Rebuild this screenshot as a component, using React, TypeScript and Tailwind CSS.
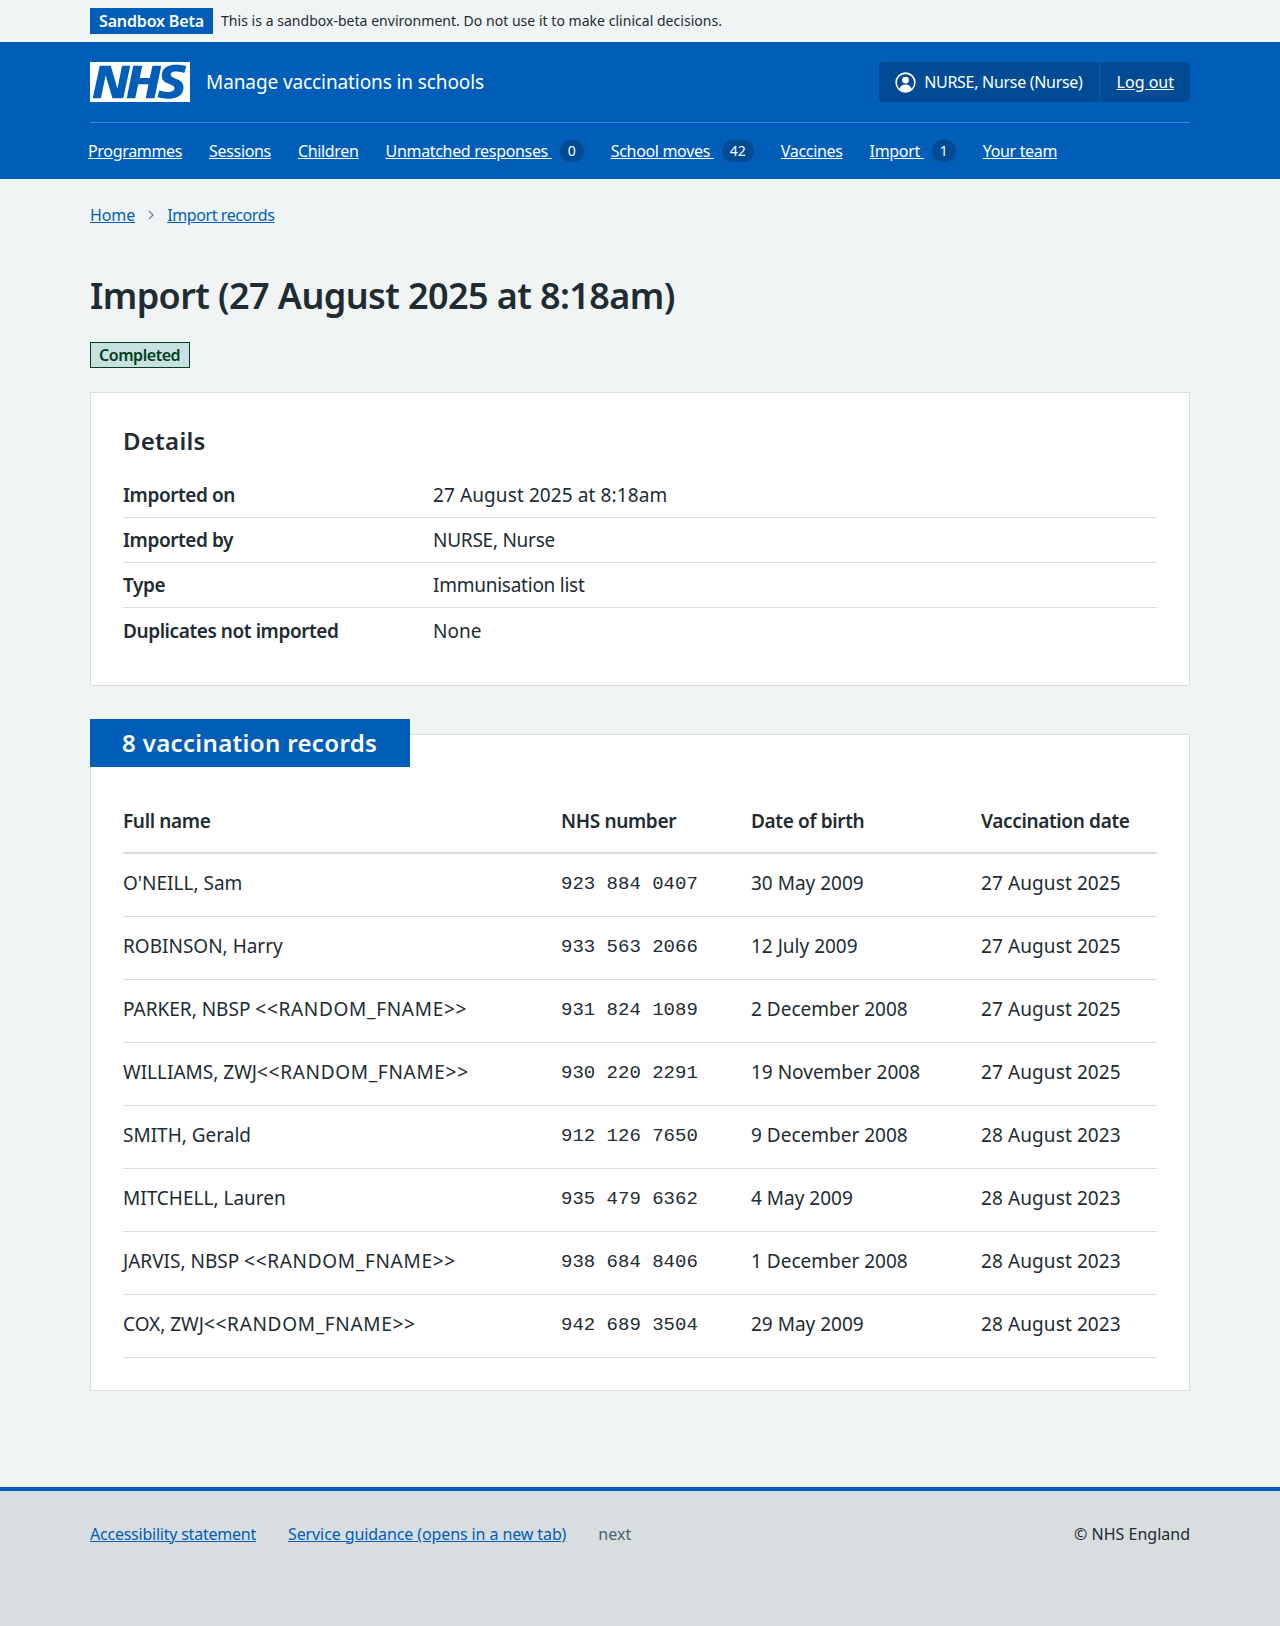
const font = "font-['Noto_Sans',sans-serif]";

function NhsLogo() {
    return (
        <svg viewBox="0 0 40 16" className="h-10 w-[100px] block">
            <path fill="#fff" d="M0 0h40v16H0z" />
            <path fill="#005eb8" d="M3.9 1.5h4.4l2.6 9h.1l1.8-9h3.3l-2.8 13H9l-2.7-9h-.1l-1.8 9H1.1M17.3 1.5h3.6l-1 4.9h4L25 1.5h3.5l-2.7 13h-3.5l1.1-5.6h-4.1l-1.2 5.6h-3.4M37.7 4.4c-.7-.3-1.6-.6-2.9-.6-1.4 0-2.5.2-2.5 1.3 0 1.8 5.1 1.2 5.1 5.1 0 3.6-3.3 4.5-6.4 4.5-1.3 0-2.9-.3-4-.7l.8-2.7c.7.4 2.1.7 3.2.7s2.8-.2 2.8-1.5c0-2.1-5.1-1.3-5.1-5 0-3.4 2.9-4.4 5.8-4.4 1.6 0 3.1.2 4 .6" />
        </svg>
    );
}

function UserIcon() {
    return (
        <svg viewBox="0 0 24 24" className="w-[23px] h-[23px]" fill="none">
            <circle cx="12" cy="12" r="9.8" stroke="#fff" strokeWidth="1.6" />
            <circle cx="12" cy="9.5" r="3.6" fill="#fff" />
            <path fill="#fff" d="M5.8 19c.4-3.400 2.800-5 6.200-5s5.800 1.600 6.200 5c-1.600 1.600-3.800 2.500-6.200 2.500S7.400 20.600 5.800 19z" />
        </svg>
    );
}

function NavItem({ label, count }: { label: string; count?: string }) {
    return (
        <span className="flex items-center">
            <a className="text-white underline whitespace-pre tracking-[-0.33px]">{label}{count ? " " : ""}</a>
            {count && (
                <span className="ml-2 h-[22px] min-w-6 px-2 rounded-full bg-[#004b93] text-white text-[14px] leading-[22px] text-center">{count}</span>
            )}
        </span>
    );
}

const details = [
    ["Imported on", "27 August 2025 at 8:18am", "tracking-[0.1px]"],
    ["Imported by", "NURSE, Nurse", "tracking-[-0.25px]"],
    ["Type", "Immunisation list", "tracking-[-0.25px]"],
    ["Duplicates not imported", "None", ""],
];

const records = [
    ["O'NEILL, Sam", "", "923 884 0407", "30 May 2009", "27 August 2025"],
    ["ROBINSON, Harry", "", "933 563 2066", "12 July 2009", "27 August 2025"],
    ["PARKER, NBSP ", "<<RANDOM_FNAME>>", "931 824 1089", "2 December 2008", "27 August 2025"],
    ["WILLIAMS, ZWJ", "<<RANDOM_FNAME>>", "930 220 2291", "19 November 2008", "27 August 2025"],
    ["SMITH, Gerald", "", "912 126 7650", "9 December 2008", "28 August 2023"],
    ["MITCHELL, Lauren", "", "935 479 6362", "4 May 2009", "28 August 2023"],
    ["JARVIS, NBSP ", "<<RANDOM_FNAME>>", "938 684 8406", "1 December 2008", "28 August 2023"],
    ["COX, ZWJ", "<<RANDOM_FNAME>>", "942 689 3504", "29 May 2009", "28 August 2023"],
];

export default function App() {
    return (
        <div className={`${font} min-h-[1626px] flex flex-col bg-[#f0f4f5] text-[#212b32] text-[19px] leading-7`}>
            <div className="h-[42px] px-[90px] flex items-center">
                <span className="bg-[#005eb8] text-white font-semibold text-[16px] leading-[26px] px-[9px] tracking-[-0.15px]">Sandbox Beta</span>
                <span className="ml-2 text-[14px] tracking-[0.03px]">This is a sandbox-beta environment. Do not use it to make clinical decisions.</span>
            </div>

            <header className="bg-[#005eb8] h-[137px] px-[90px] text-white">
                <div className="h-[81px] flex items-center justify-between border-b border-[#3d84c9]">
                    <div className="flex items-center">
                        <NhsLogo />
                        <span className="ml-4 text-[19px] tracking-[-0.1px]">Manage vaccinations in schools</span>
                    </div>
                    <div className="flex h-10 rounded bg-[#004b93] text-[16px] items-center">
                        <span className="flex items-center gap-[7px] pl-[15px] pr-4 h-full border-r border-[#005eb8] tracking-[-0.3px]"><UserIcon />NURSE, Nurse (Nurse)</span>
                        <a className="pl-[17px] pr-4 underline">Log out</a>
                    </div>
                </div>
                <nav className="flex gap-[27px] h-14 items-center text-[16px] -ml-[2px]">
                    <NavItem label="Programmes" />
                    <NavItem label="Sessions" />
                    <NavItem label="Children" />
                    <NavItem label="Unmatched responses" count="0" />
                    <NavItem label="School moves" count="42" />
                    <NavItem label="Vaccines" />
                    <NavItem label="Import" count="1" />
                    <NavItem label="Your team" />
                </nav>
            </header>

            <main className="flex-1 px-[90px]">
                <div className="flex items-center h-[72px] text-[16px] text-[#005eb8] tracking-[-0.4px]">
                    <a className="underline tracking-[-0.1px]">Home</a>
                    <svg viewBox="0 0 24 24" className="w-4 h-4 mx-2 text-[#768692]" fill="none" stroke="currentColor" strokeWidth="2"><path d="M9 6l6 6-6 6" /></svg>
                    <a className="underline">Import records</a>
                </div>
                <h1 className="mt-[21px] text-[36px] leading-[48px] font-semibold tracking-[-0.6px]">Import (27 August 2025 at 8:18am)</h1>
                <div className="mt-5">
                    <span className="inline-block border border-[#00401e] bg-[#c8e1e0] text-[#00401e] font-semibold text-[16px] leading-6 pl-2 pr-[9px] tracking-[-0.45px]">Completed</span>
                </div>

                <section className="mt-6 bg-white border border-[#d8dde0] px-8 pt-8 pb-8">
                    <h2 className="text-[24px] leading-8 font-semibold mb-4 tracking-[0.25px]">Details</h2>
                    {details.map(([k, v, t], i) => (
                        <div key={k} className={`flex h-[45px] items-center ${i < 3 ? "border-b border-[#d8dde0]" : ""}`}>
                            <span className="w-[310px] font-semibold tracking-[-0.42px]">{k}</span>
                            <span className={t}>{v}</span>
                        </div>
                    ))}
                </section>

                <section className="relative mt-12 bg-white border border-[#d8dde0] px-8 pt-[54px] pb-8">
                    <h2 className="absolute left-[-1px] top-[-16px] w-[320px] h-12 bg-[#005eb8] text-white text-[24px] leading-[48px] font-semibold pl-8 tracking-[0.35px]">8 vaccination records</h2>
                    <table className="w-full border-collapse text-left table-fixed">
                        <thead>
                            <tr className="h-16 border-b-2 border-[#d8dde0] tracking-[-0.35px]">
                                <th className="w-[438px] font-semibold">Full name</th>
                                <th className="w-[190px] font-semibold">NHS number</th>
                                <th className="w-[230px] font-semibold">Date of birth</th>
                                <th className="font-semibold">Vaccination date</th>
                            </tr>
                        </thead>
                        <tbody>
                            {records.map((r) => (
                                <tr key={r[2]} className="h-[63px] border-b border-[#d8dde0]">
                                    <td className="pb-[3px]">{r[0]}<span className="tracking-[0.7px]">{r[1]}</span></td>
                                    <td className="pb-px font-['Liberation_Mono',monospace]">{r[2]}</td>
                                    <td className="pb-[3px]">{r[3]}</td>
                                    <td className="pb-[3px] tracking-[0.1px]">{r[4]}</td>
                                </tr>
                            ))}
                        </tbody>
                    </table>
                </section>
                <div className="h-24" />
            </main>

            <footer className="h-[140px] border-t-4 border-[#005eb8] bg-[#d8dde0] px-[90px] pt-[29px] text-[16px] flex justify-between items-start">
                <div className="flex gap-8">
                    <a className="underline text-[#005eb8] tracking-[-0.23px]">Accessibility statement</a>
                    <a className="underline text-[#005eb8] tracking-[-0.1px]">Service guidance (opens in a new tab)</a>
                    <span className="text-[#4c6272]">next</span>
                </div>
                <span>© NHS England</span>
            </footer>
        </div>
    );
}
